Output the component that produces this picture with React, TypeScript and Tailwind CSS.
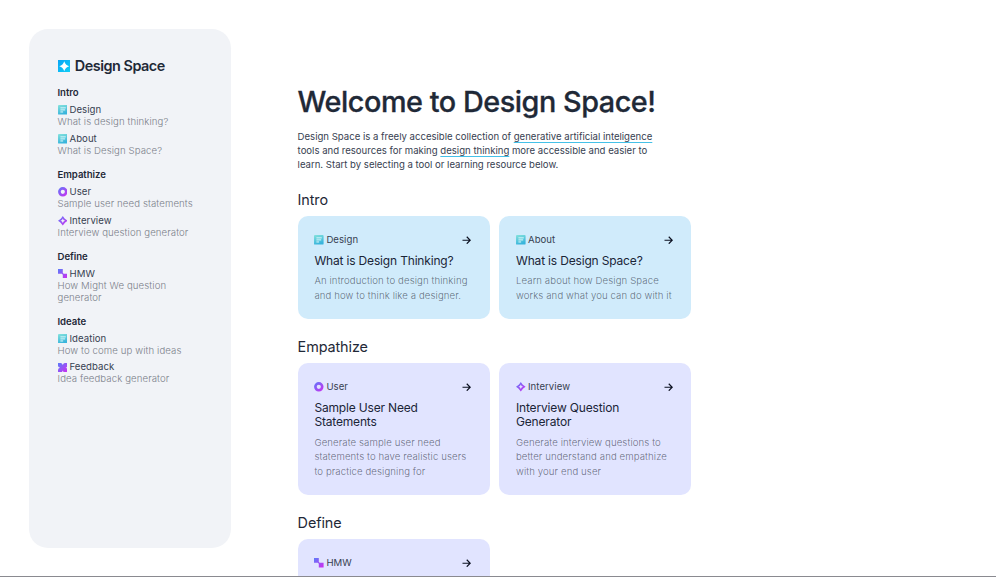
import React from "react";

type IconName = "doc" | "ring" | "diamond" | "steps" | "flower";

function ToolIcon({ name }: { name: IconName }) {
  const id = React.useId();
  const fill = `url(#${id})`;
  const cyan = name === "doc";
  return (
    <svg className="size-[9.6px] shrink-0" viewBox="0 0 16 16" fill="none">
      <defs>
        <linearGradient id={id} x1="0" y1="0" x2={cyan ? "6" : "14"} y2={cyan ? "16" : "14"} gradientUnits="userSpaceOnUse">
          <stop stopColor={cyan ? "#86e3dc" : "#5b7cfa"} />
          <stop offset="1" stopColor={cyan ? "#38b4dc" : "#c434f0"} />
        </linearGradient>
      </defs>
      {name === "doc" && (
        <>
          <rect width="16" height="16" rx="1.5" fill={fill} />
          <path d="M4 4.800h9M4 8.200h8M4 11.600h4.500" stroke="#e6fcfd" strokeWidth="1.600" />
        </>
      )}
      {name === "ring" && <circle cx="8" cy="8" r="5.7" stroke={fill} strokeWidth="4.4" />}
      {name === "diamond" && (
        <path
          fillRule="evenodd"
          fill={fill}
          d="M8 0l3 4 1 1 4 3-4 3-1 1-3 4-3-4-1-1-4-3 4-3 1-1zM8 4.200A5 5 0 0 1 4.200 8 5 5 0 0 1 8 11.800 5 5 0 0 1 11.800 8 5 5 0 0 1 8 4.200z"
        />
      )}
      {name === "steps" && <path fill={fill} d="M0 0h8v6.500L9.500 8H16v8H8V9.500L6.500 8H0z" />}
      {name === "flower" && (
        <path
          fill={fill}
          d="M0 0h4.500q2.500 0 3.500 3.500Q9 0 11.500 0H16v4.500q0 2.500-3.500 3.500 3.500 1 3.500 3.500V16h-4.500q-2.500 0-3.500-3.500Q7 16 4.500 16H0v-4.500Q0 9 3.500 8 0 7 0 4.500z"
        />
      )}
    </svg>
  );
}

function Logo() {
  return (
    <svg className="size-[12.5px] shrink-0" viewBox="0 0 24 24">
      <defs>
        <linearGradient id="logo-fill" x1="0" y1="0" x2="1" y2="1">
          <stop stopColor="#0aa5f5" />
          <stop offset="1" stopColor="#10d0f6" />
        </linearGradient>
      </defs>
      <rect width="24" height="24" fill="url(#logo-fill)" />
      <path fill="#fff" d="M12 2.500q2.200 7.300 9.500 9.500-7.300 2.200-9.500 9.500-2.200-7.300-9.500-9.500 7.300-2.200 9.500-9.500z" />
    </svg>
  );
}

function Arrow() {
  return (
    <svg className="h-[8.500px] w-[9px]" viewBox="0 0 18 17" fill="none" stroke="#0b1020" strokeWidth="2.300">
      <path d="M1 8.500h15M9.500 1.500l7 7-7 7" />
    </svg>
  );
}

type Tool = { icon: IconName; name: string; text: string };

const groups: { title: string; tools: Tool[] }[] = [
  {
    title: "Intro",
    tools: [
      { icon: "doc", name: "Design", text: "What is design thinking?" },
      { icon: "doc", name: "About", text: "What is Design Space?" },
    ],
  },
  {
    title: "Empathize",
    tools: [
      { icon: "ring", name: "User", text: "Sample user need statements" },
      { icon: "diamond", name: "Interview", text: "Interview question generator" },
    ],
  },
  { title: "Define", tools: [{ icon: "steps", name: "HMW", text: "How Might We question generator" }] },
  {
    title: "Ideate",
    tools: [
      { icon: "doc", name: "Ideation", text: "How to come up with ideas" },
      { icon: "flower", name: "Feedback", text: "Idea feedback generator" },
    ],
  },
];

type CardData = Tool & { title: string };

const sections: { title: string; tone: string; cards: CardData[] }[] = [
  {
    title: "Intro",
    tone: "bg-[#d0ebfb]",
    cards: [
      {
        icon: "doc",
        name: "Design",
        title: "What is Design Thinking?",
        text: "An introduction to design thinking and how to think like a designer.",
      },
      {
        icon: "doc",
        name: "About",
        title: "What is Design Space?",
        text: "Learn about how Design Space works and what you can do with it",
      },
    ],
  },
  {
    title: "Empathize",
    tone: "bg-[#e1e4ff]",
    cards: [
      {
        icon: "ring",
        name: "User",
        title: "Sample User Need Statements",
        text: "Generate sample user need statements to have realistic users to practice designing for",
      },
      {
        icon: "diamond",
        name: "Interview",
        title: "Interview Question Generator",
        text: "Generate interview questions to better understand and empathize with your end user",
      },
    ],
  },
  { title: "Define", tone: "bg-[#e1e4ff]", cards: [{ icon: "steps", name: "HMW", title: "", text: "" }] },
];

function Card({ card, tone }: { card: CardData; tone: string }) {
  return (
    <a className={`block min-h-[103px] w-[192px] rounded-[10px] px-[16.8px] pt-[17px] pb-[16px] ${tone}`}>
      <div className="flex h-[14.4px] items-center justify-between">
        <div className="flex items-center gap-[2.4px] text-[9.6px] text-[#374151]">
          <ToolIcon name={card.icon} />
          <span className="pt-px tracking-[0.05px]">{card.name}</span>
        </div>
        <div className="mr-[1.5px] flex">
          <Arrow />
        </div>
      </div>
      {card.title && (
        <>
          <h3 className="mt-[6.4px] text-[12px] leading-[14.4px] tracking-[-0.17px] text-[#1b2537]">{card.title}</h3>
          <p className="mt-[6.5px] text-[9.6px] leading-[14.4px] font-light tracking-[0.11px] text-[#1f2937]/65">
            {card.text}
          </p>
        </>
      )}
    </a>
  );
}

export default function App() {
  return (
    <div className="flex h-[577px] overflow-hidden border-b border-[#8a8a90] bg-white font-['Inter',sans-serif] text-[#1f2937]">
      <aside className="mt-[28.5px] ml-[29px] h-[519px] w-[201.6px] shrink-0 rounded-[19.2px] bg-[#f1f3f7] px-[28.5px] pt-[28.8px]">
        <div className="flex h-[17px] items-center gap-[4.8px]">
          <Logo />
          <span className="text-[14.4px] font-semibold tracking-[-0.47px]">Design Space</span>
        </div>
        <nav className="mt-[13.2px] flex flex-col gap-[12.1px] text-[9.6px] leading-[12px]">
          {groups.map((group) => (
            <section key={group.title} className="flex flex-col gap-[4.8px]">
              <h2 className="font-semibold tracking-[-0.05px]">{group.title}</h2>
              {group.tools.map((tool) => (
                <a key={tool.name} className="block">
                  <span className="flex items-center gap-[2.4px] text-[#374151]">
                    <ToolIcon name={tool.icon} />
                    <span className="tracking-[0.05px]">{tool.name}</span>
                  </span>
                  <span className="block font-light tracking-[0.11px] text-[#7b808a]">{tool.text}</span>
                </a>
              ))}
            </section>
          ))}
        </nav>
      </aside>
      <main className="ml-[67px] w-[394px] shrink-0 pt-[84px]">
        <h1 className="text-[28.8px] leading-[36px] font-medium tracking-[-0.46px] whitespace-nowrap [-webkit-text-stroke:0.3px_#1f2937]">
          Welcome to Design Space!
        </h1>
        <p className="mt-[9.6px] w-[362px] text-[9.6px] leading-[14.4px] tracking-[-0.01px] text-[#374151]">
          Design Space is a freely accesible collection of{" "}
          <a className="underline decoration-[#45c1e8] decoration-1 underline-offset-2">
            generative artificial inteligence
          </a>{" "}
          tools and resources for making{" "}
          <a className="underline decoration-[#45c1e8] decoration-1 underline-offset-2">design thinking</a> more
          accessible and easier to learn. Start by selecting a tool or learning resource below.
        </p>
        <div className="mt-[16.4px] flex flex-col gap-[17px]">
          {sections.map((section) => (
            <section key={section.title}>
              <h2 className="text-[14.4px] leading-[21.6px] tracking-[-0.1px]">{section.title}</h2>
              <div className="mt-[5px] flex gap-[9.6px]">
                {section.cards.map((card) => (
                  <Card key={card.name} card={card} tone={section.tone} />
                ))}
              </div>
            </section>
          ))}
        </div>
      </main>
    </div>
  );
}
